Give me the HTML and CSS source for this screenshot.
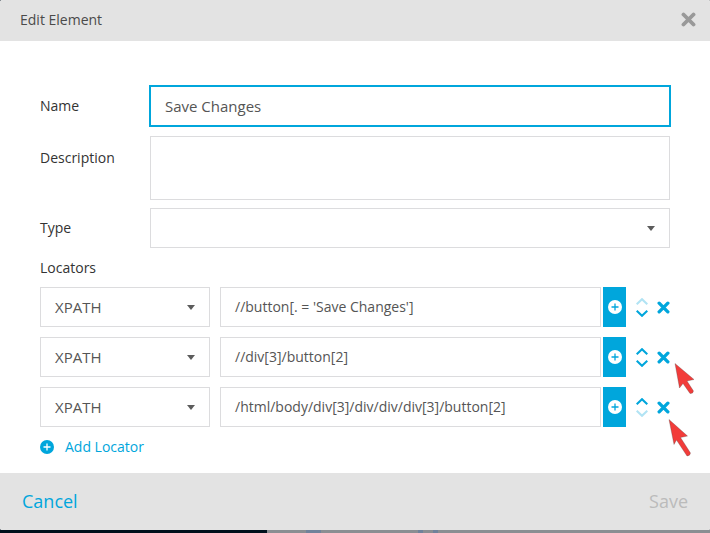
FILE: index.html
```html
<!DOCTYPE html>
<html lang="en">
<head>
<meta charset="utf-8">
<title>Edit Element</title>
<link rel="stylesheet" href="styles.css">
</head>
<body>
<svg width="0" height="0" class="defs" aria-hidden="true">
  <symbol id="x" viewBox="0 0 12 12"><path d="M2 2 10 10M10 2 2 10" fill="none" stroke="currentColor" stroke-width="3.1" stroke-linecap="round"/></symbol>
  <symbol id="plus" viewBox="0 0 14 14"><circle cx="7" cy="7" r="7" fill="currentColor"/><path d="M7 3.500v7M3.500 7h7" fill="none" stroke="var(--cross)" stroke-width="1.300"/></symbol>
  <symbol id="up" viewBox="0 0 12 7"><path d="M.7 6.200 6 1.200l5.300 5" fill="none" stroke="currentColor" stroke-width="2.100"/></symbol>
  <symbol id="down" viewBox="0 0 12 7"><path d="M.7 .8 6 5.800 11.300 .8" fill="none" stroke="currentColor" stroke-width="2.100"/></symbol>
</svg>
<main class="dialog">
  <header class="header"><h1>Edit Element</h1><svg class="close"><use href="#x"/></svg></header>
  <section class="body">
    <div class="row name"><label>Name</label><div class="field focused">Save Changes</div></div>
    <div class="row description"><label>Description</label><div class="field"></div></div>
    <div class="row type"><label>Type</label><div class="field select"><span></span><i class="caret"></i></div></div>
    <div class="locators-title">Locators</div>
    <div class="locators">
      <div class="locator">
        <div class="field select"><span>XPATH</span><i class="caret"></i></div>
        <div class="field value">//button[. = 'Save Changes']</div>
        <div class="add"><svg><use href="#plus"/></svg></div>
        <div class="order"><svg class="off"><use href="#up"/></svg><svg><use href="#down"/></svg></div>
        <svg class="remove"><use href="#x"/></svg>
      </div>
      <div class="locator">
        <div class="field select"><span>XPATH</span><i class="caret"></i></div>
        <div class="field value">//div[3]/button[2]</div>
        <div class="add"><svg><use href="#plus"/></svg></div>
        <div class="order"><svg><use href="#up"/></svg><svg><use href="#down"/></svg></div>
        <svg class="remove"><use href="#x"/></svg>
      </div>
      <div class="locator">
        <div class="field select"><span>XPATH</span><i class="caret"></i></div>
        <div class="field value">/html/body/div[3]/div/div/div[3]/button[2]</div>
        <div class="add"><svg><use href="#plus"/></svg></div>
        <div class="order"><svg><use href="#up"/></svg><svg class="off"><use href="#down"/></svg></div>
        <svg class="remove"><use href="#x"/></svg>
      </div>
    </div>
    <div class="add-locator"><svg><use href="#plus"/></svg>Add Locator</div>
  </section>
  <footer class="footer"><span class="cancel">Cancel</span><span class="save">Save</span></footer>
</main>
<svg class="pointer first" viewBox="0 0 24 34"><path d="M1 1.500 20 17.500 13 19 19.500 29Q19 32 16 31.500L9 21.500 5.500 26Z"/></svg>
<svg class="pointer second" viewBox="0 0 24 40"><path d="M1 .5 19.500 17 12.500 18.500 22.500 34Q22 37 19 37L8.500 21 6 25.500Z"/></svg>
<div class="backdrop"><i class="dark"></i><i class="bar"></i><i class="ring"></i></div>
</body>
</html>
```

FILE: styles.css
```css
* { box-sizing: border-box; }
:root { --accent: #00a6dc; }
body {
  margin: 0;
  width: 710px;
  height: 533px;
  overflow: hidden;
  position: relative;
  background: linear-gradient(90deg, #00101c 50%, #8b8e92 50%);
  font: 14px/20px "Open Sans", "Noto Sans", sans-serif;
  color: #333;
}
svg { display: block; flex: none; }
.defs { position: absolute; }
.dialog {
  position: relative;
  z-index: 1;
  height: 530px;
  display: flex;
  flex-direction: column;
  background: #fff;
  border-radius: 2px;
  overflow: hidden;
}
.header {
  height: 41px;
  padding: 0 14px 0 20px;
  display: flex;
  align-items: center;
  justify-content: space-between;
  background: #e3e3e3;
}
.header h1 { margin: 0; padding-bottom: 1px; font-size: 14px; font-weight: 400; color: #4a4a4a; }
.close { width: 15px; height: 15px; margin-bottom: 2px; color: #999; }
.body { flex: 1; padding: 45px 40px 0; }
.row { display: flex; align-items: center; }
.row label { width: 110px; }
.row .field { flex: 1; }
.name { height: 40px; }
.description { height: 64px; margin-top: 10px; align-items: flex-start; }
.description label { padding-top: 12px; }
.description .field { height: 64px; }
.type { margin-top: 8px; }
.field {
  height: 40px;
  padding: 0 14px;
  display: flex;
  align-items: center;
  border: 1px solid #dcdcde;
  background: #fff;
  color: #555;
  font-size: 15px;
}
.focused { border-color: var(--accent); outline: 1px solid var(--accent); }
.select { justify-content: space-between; }
.caret {
  border: 4px solid transparent;
  border-top: 5px solid #5c5c5c;
  border-bottom: 0;
}
.locators-title { margin-top: 10px; }
.locators { margin-top: 9px; display: flex; flex-direction: column; gap: 10px; }
.locator { display: flex; align-items: center; height: 40px; color: var(--accent); }
.locator .select { width: 170px; margin-right: 10px; }
.value { width: 381px; margin-right: 2px; font-size: 14px; }
.add {
  --cross: var(--accent);
  width: 23px;
  height: 40px;
  padding-bottom: 1px;
  display: grid;
  place-items: center;
  background: var(--accent);
  color: #fff;
}
.add svg, .add-locator svg { width: 14px; height: 14px; }
.add-locator svg { margin-bottom: 1px; }
.order { width: 12px; margin: 0 10px; display: grid; gap: 5px; }
.order svg { width: 12px; height: 7px; }
.off { opacity: .3; }
.remove { width: 13px; height: 13px; margin-left: -1px; }
.add-locator {
  --cross: #fff;
  margin-top: 10px;
  display: flex;
  align-items: center;
  gap: 11px;
  color: var(--accent);
}
.footer {
  height: 57px;
  padding: 0 22px 2px;
  display: flex;
  align-items: center;
  justify-content: space-between;
  background: #e3e3e3;
  font-size: 18px;
}
.cancel { color: var(--accent); }
.save { color: #bbb; }
.pointer { position: absolute; z-index: 2; width: 24px; fill: #f23c3a; stroke: rgba(70, 60, 60, .4); stroke-width: .7; }
.first { left: 674px; top: 362px; height: 34px; }
.second { left: 668px; top: 419px; height: 40px; }
.backdrop { display: flex; height: 3px; background: #8b8e92; }
.dark { width: 267px; background: #00101c; }
.bar { width: 15px; margin-left: 39px; background: #71829b; }
.ring { width: 20px; margin-left: 97px; border: solid #71829b; border-width: 0 5px; }
```
